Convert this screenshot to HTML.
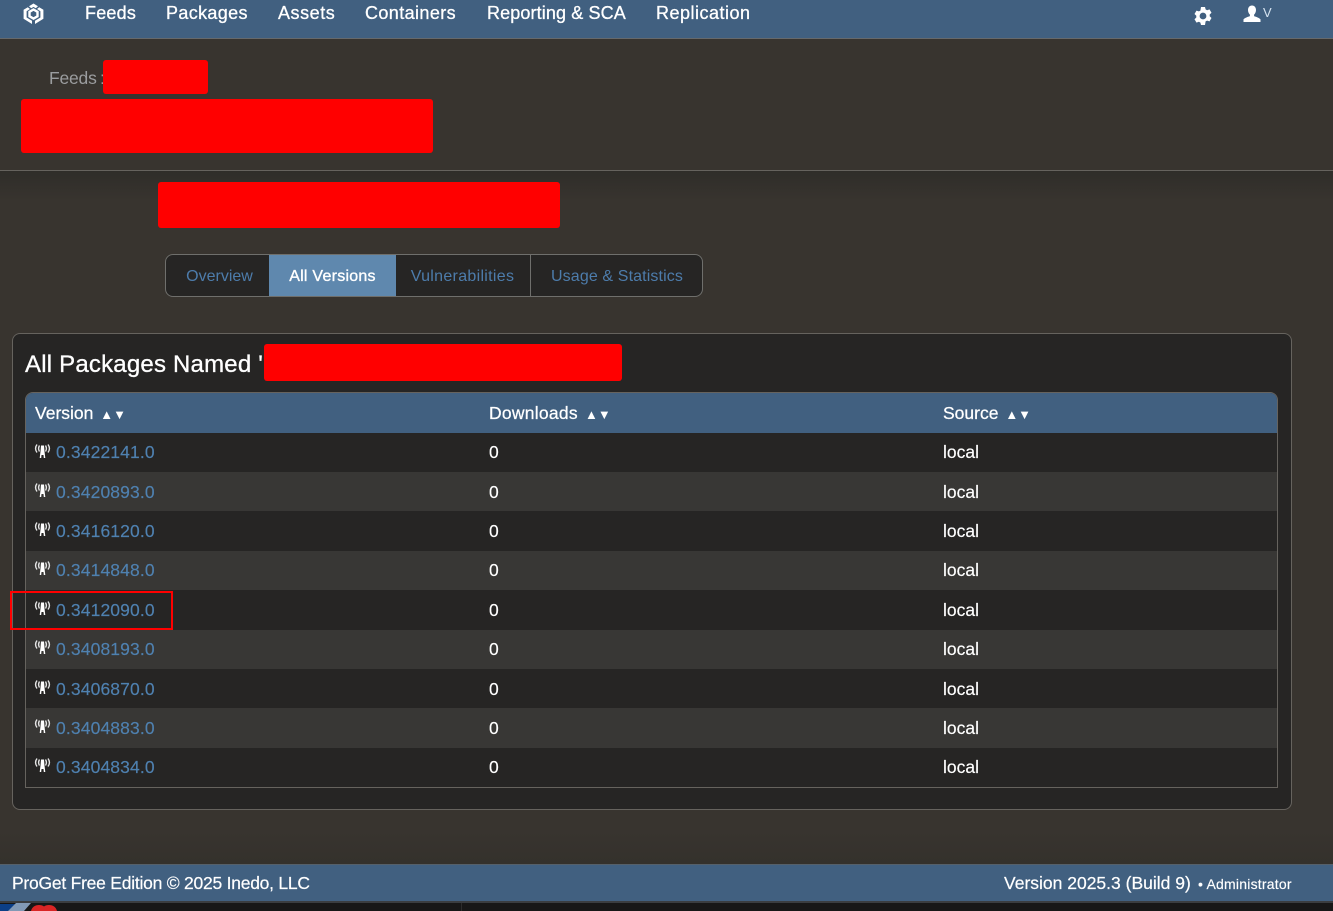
<!DOCTYPE html>
<html lang="en">
<head>
<meta charset="utf-8">
<title>ProGet</title>
<style>
html,body{margin:0;padding:0;width:1333px;height:911px;overflow:hidden;background:#38342f;font-family:"Liberation Sans",sans-serif;}
*{box-sizing:border-box}
.abs,.t{position:absolute}
.t{white-space:nowrap;line-height:20px}
.nav{color:#fff;font-size:18px;top:4px;line-height:19px;-webkit-text-stroke:.3px #fff}
.red{position:absolute;background:#f00;border-radius:3px}
.tab{position:absolute;top:255px;height:41px;line-height:43px;font-size:16px;color:#4d7cab;text-align:center}
.row{position:absolute;left:26px;width:1251px;background:#262524}
.row.alt{background:#383735}
.c{position:absolute;white-space:nowrap;font-size:17.5px;line-height:20px;color:#fff;-webkit-text-stroke:.15px currentColor}
.v{color:#4f81b0;left:30px;letter-spacing:.13px}
.d{left:463px}
.s{left:917px}
.ic{position:absolute;left:8px;width:17px;height:16px}
.th{position:absolute;top:403px;font-size:17.5px;line-height:20px;color:#fff;white-space:nowrap;-webkit-text-stroke:.25px #fff}
.th span{font-size:13px;margin-left:2px;-webkit-text-stroke:0;letter-spacing:0}
</style>
</head>
<body>
<svg width="0" height="0" style="position:absolute"><defs>
<symbol id="tw" viewBox="0 0 17 16">
<g fill="none" stroke="#e4e4e4" stroke-width="1.4">
<path d="M5.500 2.500C4.300 4.500 4.300 6.500 5.500 8.500"/><path d="M11.500 2.500C12.700 4.500 12.700 6.500 11.500 8.500"/>
<path d="M3 1.500C1.200 4 1.200 7 3 9.500"/><path d="M14 1.500C15.800 4 15.800 7 14 9.500"/>
</g>
<path fill="#fff" d="M7 2.500h3l.5 6 .8 6.500H9.800L9.500 12h-2L7.200 15H5.700l.8-6.500z"/>
</symbol>
</defs></svg>

<!-- top nav -->
<div class="abs" style="left:0;top:0;width:1333px;height:39px;background:#416080;border-bottom:1px solid #66696b"></div>
<svg class="abs" style="left:23px;top:3px" width="21" height="22" viewBox="0 0 21 22">
<path fill="#fff" d="M10.500 .5L15 3.200 12.800 5.200 10.500 3.900 8.200 5.200 6 3.200z"/>
<path fill="#fff" d="M4.800 4.200L.6 6.700V15.800L9 21V17.800L3.600 14.500V8.200L7 6z"/>
<path fill="#fff" d="M16.200 4.200L20.400 6.700V15.800L12 21V17.800L17.400 14.500V8.200L14 6z"/>
<path fill="none" stroke="#fff" stroke-width="2.400" d="M10.500 6.500L14.500 8.800V13.300L10.500 15.600 6.500 13.300V8.800z"/>
</svg>
<div class="t nav" style="left:85px;letter-spacing:.2px">Feeds</div>
<div class="t nav" style="left:166px;letter-spacing:.35px">Packages</div>
<div class="t nav" style="left:278px;letter-spacing:.55px">Assets</div>
<div class="t nav" style="left:365px;letter-spacing:.4px">Containers</div>
<div class="t nav" style="left:487px;letter-spacing:.12px">Reporting &amp; SCA</div>
<div class="t nav" style="left:656px;letter-spacing:.5px">Replication</div>
<svg class="abs" style="left:1193px;top:6px" width="20" height="20" viewBox="0 0 20 20">
<path fill="#fff" fill-rule="evenodd" d="M8 1h4l.6 2.400 1.500.8 2.400-.8 2 3.400-1.800 1.700v1.800l1.800 1.700-2 3.400-2.400-.8-1.500.8L12 19H8l-.6-2.400-1.500-.8-2.400.8-2-3.400 1.800-1.700V9.700L1.500 8 3.500 4.600l2.400.8 1.500-.8zM10 6.600a3.400 3.400 0 1 0 0 6.800 3.400 3.400 0 0 0 0-6.800z"/>
</svg>
<svg class="abs" style="left:1243px;top:5px" width="18" height="18" viewBox="0 0 18 18">
<path fill="#fff" d="M9 .5c2.600 0 4 2 4 4.500 0 2-.8 3.500-1.900 4.600v1.500c2.200.8 5.700 2 6.400 3.300V17H.5v-2.600c.7-1.300 4.200-2.500 6.400-3.300V9.600C5.800 8.500 5 7 5 5 5 2.500 6.400.5 9 .5z"/>
</svg>
<div class="t" style="left:1263px;top:3px;color:#d5e3ef;font-size:13px">V</div>

<!-- breadcrumb header -->
<div class="t" style="left:49px;top:68px;font-size:17.500px;color:#9b9d9f;letter-spacing:-.2px">Feeds</div>
<div class="t" style="left:100px;top:68px;font-size:17.500px;color:#9b9d9f">:</div>
<div class="red" style="left:103px;top:60px;width:105px;height:34px"></div>
<div class="red" style="left:21px;top:99px;width:412px;height:54px"></div>

<!-- separator and lower gradient -->
<div class="abs" style="left:0;top:170px;width:1333px;height:1px;background:#66635e"></div>
<div class="abs" style="left:0;top:171px;width:1333px;height:30px;background:linear-gradient(#2f2d29,#38342f)"></div>
<div class="red" style="left:158px;top:182px;width:402px;height:46px"></div>

<!-- tabs -->
<div class="abs" style="left:165px;top:254px;width:538px;height:43px;background:#262524;border:1px solid #6f6f6c;border-radius:8px"></div>
<div class="tab" style="left:170px;width:99px">Overview</div>
<div class="tab" style="left:269px;width:127px;background:#5f88ae;color:#fff;-webkit-text-stroke:.35px #fff;letter-spacing:.25px">All Versions</div>
<div class="tab" style="left:396px;width:133px;letter-spacing:.3px">Vulnerabilities</div>
<div class="abs" style="left:530px;top:255px;width:1px;height:41px;background:#6f6f6c"></div>
<div class="tab" style="left:531px;width:171px;letter-spacing:.12px;padding-left:1px">Usage &amp; Statistics</div>

<!-- panel -->
<div class="abs" style="left:12px;top:333px;width:1280px;height:477px;background:#262524;border:1px solid #66635e;border-radius:8px"></div>
<div class="t" style="left:25px;top:354px;font-size:24px;line-height:22px;color:#fff;letter-spacing:.2px;-webkit-text-stroke:.3px #fff">All Packages Named '</div>
<div class="red" style="left:264px;top:344px;width:358px;height:37px"></div>

<!-- table -->
<div class="abs" style="left:25px;top:392px;width:1253px;height:396px;border:1px solid #66635e;border-radius:8px 8px 0 0"></div>
<div class="abs" style="left:26px;top:393px;width:1251px;height:40px;background:#416080;border-radius:7px 7px 0 0"></div>
<div class="th" style="left:35px">Version <span>▲▼</span></div>
<div class="th" style="left:489px;letter-spacing:.25px">Downloads <span>▲▼</span></div>
<div class="th" style="left:943px">Source <span>▲▼</span></div>

<div class="row" style="top:433px;height:39px"><svg class="ic" style="top:10px"><use href="#tw"/></svg><div class="c v" style="top:9px">0.3422141.0</div><div class="c d" style="top:9px">0</div><div class="c s" style="top:9px">local</div></div>
<div class="row alt" style="top:472px;height:39px"><svg class="ic" style="top:10px"><use href="#tw"/></svg><div class="c v" style="top:10px">0.3420893.0</div><div class="c d" style="top:10px">0</div><div class="c s" style="top:10px">local</div></div>
<div class="row" style="top:511px;height:40px"><svg class="ic" style="top:10px"><use href="#tw"/></svg><div class="c v" style="top:10px">0.3416120.0</div><div class="c d" style="top:10px">0</div><div class="c s" style="top:10px">local</div></div>
<div class="row alt" style="top:551px;height:39px"><svg class="ic" style="top:9px"><use href="#tw"/></svg><div class="c v" style="top:9px">0.3414848.0</div><div class="c d" style="top:9px">0</div><div class="c s" style="top:9px">local</div></div>
<div class="row" style="top:590px;height:40px"><svg class="ic" style="top:10px"><use href="#tw"/></svg><div class="c v" style="top:10px">0.3412090.0</div><div class="c d" style="top:10px">0</div><div class="c s" style="top:10px">local</div></div>
<div class="row alt" style="top:630px;height:39px"><svg class="ic" style="top:9px"><use href="#tw"/></svg><div class="c v" style="top:9px">0.3408193.0</div><div class="c d" style="top:9px">0</div><div class="c s" style="top:9px">local</div></div>
<div class="row" style="top:669px;height:39px"><svg class="ic" style="top:10px"><use href="#tw"/></svg><div class="c v" style="top:10px">0.3406870.0</div><div class="c d" style="top:10px">0</div><div class="c s" style="top:10px">local</div></div>
<div class="row alt" style="top:708px;height:40px"><svg class="ic" style="top:10px"><use href="#tw"/></svg><div class="c v" style="top:10px">0.3404883.0</div><div class="c d" style="top:10px">0</div><div class="c s" style="top:10px">local</div></div>
<div class="row" style="top:748px;height:39px"><svg class="ic" style="top:9px"><use href="#tw"/></svg><div class="c v" style="top:9px">0.3404834.0</div><div class="c d" style="top:9px">0</div><div class="c s" style="top:9px">local</div></div>

<!-- annotation -->
<div class="abs" style="left:10px;top:591px;width:163px;height:39px;border:2px solid #f00"></div>

<!-- footer -->
<div class="abs" style="left:0;top:830px;width:1333px;height:34px;background:linear-gradient(#38342f,#34312c)"></div>
<div class="abs" style="left:0;top:864px;width:1333px;height:39px;background:#416080;border-top:1px solid #55606a;border-bottom:2px solid #3a3d40"></div>
<div class="t" style="left:12px;top:873px;font-size:17.500px;color:#fff;letter-spacing:-.24px;-webkit-text-stroke:.2px #fff">ProGet Free Edition © 2025 Inedo, LLC</div>
<div class="t" style="left:1004px;top:873px;font-size:17.500px;color:#fff;-webkit-text-stroke:.2px #fff">Version 2025.3 (Build 9)</div>
<div class="t" style="left:1198px;top:874px;font-size:14px;color:#fff;letter-spacing:.22px;-webkit-text-stroke:.15px #fff">• Administrator</div>

<!-- strip below window -->
<div class="abs" style="left:0;top:903px;width:1333px;height:8px;background:#171717"></div>
<div class="abs" style="left:461px;top:903px;width:1px;height:8px;background:#2c2c2c"></div>
<svg class="abs" style="left:0;top:903px" width="62" height="8" viewBox="0 0 62 8">
<path fill="#0c3f86" d="M0 1h16L8 8H0z"/>
<path fill="#8199b5" d="M16 0h15l-7 8H8z"/>
<path fill="#d92525" d="M31 8c1-4 4-6 8-6 2 0 4 .6 5 1.500 1-.9 3-1.500 5-1.500 4 0 7 2 8 6z"/>
</svg>
</body>
</html>
